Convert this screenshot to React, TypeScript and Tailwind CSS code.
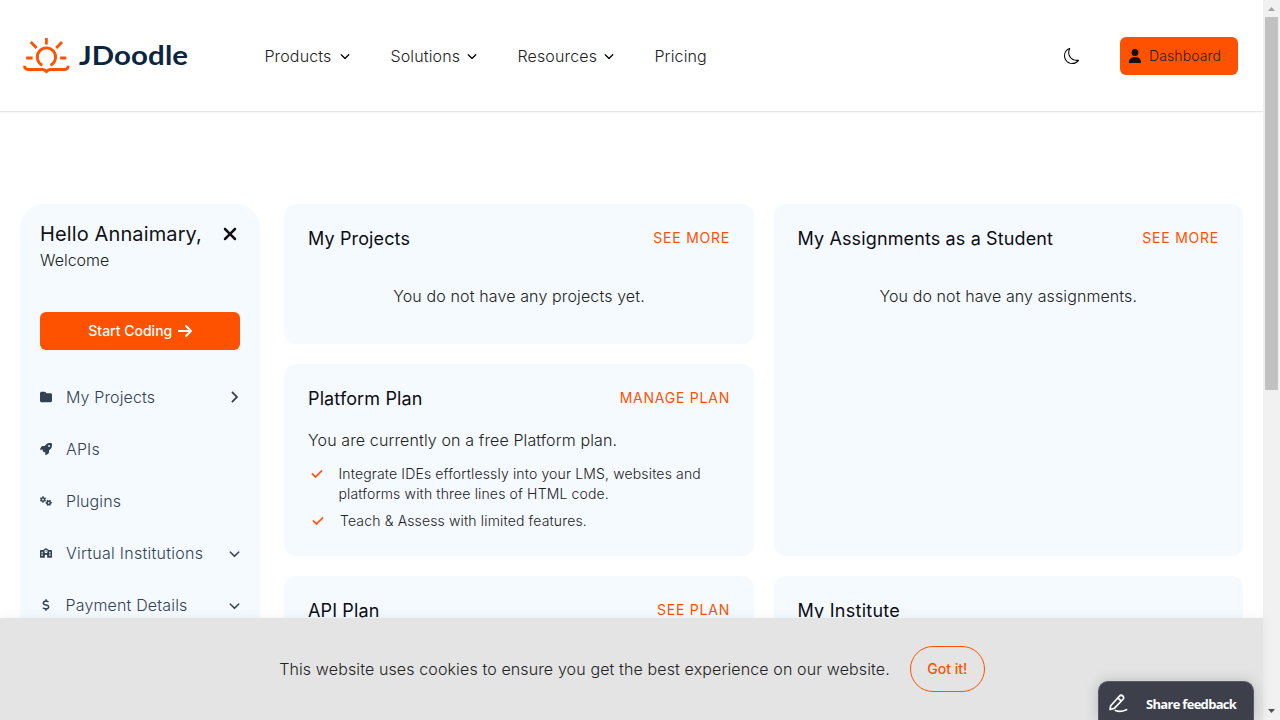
import type { ReactNode } from 'react';
import {
  FaArrowRight,
  FaCheck,
  FaChevronDown,
  FaChevronRight,
  FaDollarSign,
  FaFolder,
  FaGears,
  FaRocket,
  FaSchool,
  FaUser,
  FaXmark,
} from 'react-icons/fa6';
import { BsMoon } from 'react-icons/bs';

function Logo() {
  return (
    <div className="flex items-center">
      <svg width="48" height="38" viewBox="0 0 48 38" fill="none" stroke="#ff5200" strokeWidth="2.800" strokeLinecap="butt">
        <path d="M19.300 28.300A9.200 9.200 0 1 1 27.500 28.300" />
        <path d="M23.400 1v6.500M7.800 5l5.800 6M39 5l-5.800 6M3.200 21h6.400M37.100 21h6.200" />
        <path d="M1.500 28.800c0 2.700 1 3.700 3.500 3.700h14.600c2 0 2.900.8 3.800 2.200.9-1.400 1.800-2.200 3.800-2.200h14.500c2.500 0 3.500-1 3.500-3.700" strokeLinejoin="round" />
      </svg>
      <span className="mt-[-1px] ml-[8px] inline-block origin-left scale-x-[1.09] font-['Lato',sans-serif] text-[27px] leading-[34px] font-bold tracking-[0.100px] text-[#0b2540]">JDoodle</span>
    </div>
  );
}

function NavItem({ label, className }: { label: string; className: string }) {
  return (
    <div className={`flex items-center justify-between ${className}`}>
      <span>{label}</span>
      {label !== 'Pricing' && <FaChevronDown size={10} className="text-black" />}
    </div>
  );
}

function SideItem({ icon, label, trailing, className = 'tracking-[0.13px]' }: { icon: ReactNode; label: string; trailing?: ReactNode; className?: string }) {
  return (
    <li className="flex h-[52px] items-center">
      <span className="w-[26px] shrink-0">{icon}</span>
      <span className={`flex-1 whitespace-nowrap ${className}`}>{label}</span>
      {trailing}
    </li>
  );
}

function Card({ title, action, className, children }: { title: string; action?: string; className: string; children?: ReactNode }) {
  return (
    <section className={`rounded-xl bg-[#f5faff] px-6 pt-5 font-normal ${className}`}>
      <header className="flex h-7 items-center justify-between">
        <h2 className={`text-[18px] text-[#0c0c14] ${title === 'My Institute' ? 'tracking-[0.25px]' : 'tracking-[0.13px]'}`}>{title}</h2>
        {action && <a className="mb-px text-[14px] tracking-[0.770px] text-[#ff5200]">{action}</a>}
      </header>
      {children}
    </section>
  );
}

export default function App() {
  return (
    <div className="relative flex h-[720px] w-[1280px] overflow-hidden bg-white font-['Inter',sans-serif] text-[16px] font-light text-[#222]">
      <main className="h-[720px] w-[1263px] overflow-hidden">
        <header className="flex h-[112px] items-center border-b border-[#e8e8e8] pl-[23px] shadow-[0_1px_2px_rgba(0,0,0,0.04)]">
          <div className="w-[241.400px]"><Logo /></div>
          <nav className="flex flex-1 items-center tracking-[0.15px]">
            <NavItem label="Products" className="mr-[40px] w-[86px]" />
            <NavItem label="Solutions" className="mr-[40px] w-[87px]" />
            <NavItem label="Resources" className="mr-[40px] w-[97px]" />
            <NavItem label="Pricing" className="w-[52px]" />
          </nav>
          <BsMoon size={16} className="mr-[40px] text-black" />
          <button className="mr-[25px] flex h-[38px] w-[118px] items-center rounded-md bg-[#ff5200] pl-[8px] text-[14px] tracking-[0.1px] text-[#222]">
            <FaUser size={14} className="mr-[7px] text-[#111]" />
            Dashboard
          </button>
        </header>

        <div className="flex gap-6 pt-[92px] pl-5">
          <aside className="h-[600px] w-[240px] rounded-t-3xl bg-[#f5faff] px-5 pt-4">
            <div className="flex h-7 items-center justify-between text-[#111]">
              <h1 className="text-[20px] font-normal tracking-[0.120px] whitespace-nowrap">Hello Annaimary,</h1>
              <FaXmark size={20} />
            </div>
            <p className="h-6 leading-6">Welcome</p>
            <button className="mt-[40px] flex h-[38px] w-full items-center justify-center gap-[4.500px] rounded-md bg-[#ff5200] pb-px pl-px text-[14px] font-medium text-white">
              Start Coding <FaArrowRight size={16} />
            </button>
            <ul className="mt-[21px] text-[#334155]">
              <SideItem icon={<FaFolder size={12} />} label="My Projects" trailing={<FaChevronRight size={12} stroke="currentColor" strokeWidth={20} />} />
              <SideItem icon={<FaRocket size={12} />} label="APIs" />
              <SideItem icon={<FaGears size={12} />} label="Plugins" />
              <SideItem icon={<FaSchool size={12} />} label="Virtual Institutions" className="tracking-[0.260px]" trailing={<FaChevronDown size={11} stroke="currentColor" strokeWidth={12} />} />
              <SideItem icon={<FaDollarSign size={12} />} label="Payment Details" className="-ml-[0.500px] tracking-[0.160px]" trailing={<FaChevronDown size={11} stroke="currentColor" strokeWidth={12} />} />
            </ul>
          </aside>

          <div className="grid grid-cols-[470px_470px] grid-rows-[140px_192px_160px] gap-x-[19.500px] gap-y-5">
            <Card title="My Projects" action="SEE MORE" className="">
              <p className="mt-8 text-center leading-6 font-light tracking-[0.13px]">You do not have any projects yet.</p>
            </Card>
            <Card title="My Assignments as a Student" action="SEE MORE" className="row-span-2 mr-[0.500px]">
              <p className="mt-8 text-center leading-6 font-light tracking-[0.1px]">You do not have any assignments.</p>
            </Card>
            <Card title="Platform Plan" action="MANAGE PLAN" className="">
              <p className="mt-4 leading-6 font-light tracking-[0.12px]">You are currently on a free Platform plan.</p>
              <ul className="mt-3 text-[14px] leading-5 font-light tracking-[0.150px]">
                <li className="flex">
                  <FaCheck size={12} stroke="currentColor" strokeWidth={14} className="mt-1 mr-[15.500px] ml-[3px] shrink-0 text-[#ff5200]" />
                  <span>Integrate IDEs effortlessly into your LMS, websites and<br />platforms with three lines of HTML code.</span>
                </li>
                <li className="mt-[7px] flex">
                  <FaCheck size={12} stroke="currentColor" strokeWidth={14} className="mt-[3.500px] mr-[16px] ml-[4px] shrink-0 text-[#ff5200]" />
                  <span>Teach &amp; Assess with limited features.</span>
                </li>
              </ul>
            </Card>
            <Card title="API Plan" action="SEE PLAN" className="" />
            <Card title="My Institute" className="mr-[0.500px]" />
          </div>
        </div>
      </main>

      <div className="flex h-[720px] w-[17px] flex-col items-center bg-[#f1f1f1]">
        <svg width="17" height="17" viewBox="0 0 17 17"><path d="M5 11l3.500-4 3.500 4z" fill="#a3a3a3" /></svg>
        <div className="h-[373px] w-[13px] bg-[#c1c1c1]" />
        <svg className="mt-auto" width="17" height="17" viewBox="0 0 17 17"><path d="M5 6l3.500 4 3.500-4z" fill="#505050" /></svg>
      </div>

      <div className="absolute bottom-0 left-0 flex h-[102px] w-[1263px] items-center justify-center gap-5 bg-[#e4e4e4] pl-px tracking-[0.125px] shadow-[0_0_12px_rgba(0,0,0,0.06)]">
        <p>This website uses cookies to ensure you get the best experience on our website.</p>
        <button className="h-[46px] w-[75px] rounded-[24px] border border-[#ff5200] pb-px text-[14px] font-medium tracking-normal text-[#ff5200]">Got it!</button>
      </div>

      <button className="absolute bottom-0 left-[1098px] flex h-[39px] w-[156px] items-center rounded-t-[10px] border border-b-0 border-[#555963] bg-[#3d404b] pt-[7px] pl-[10px] font-['Open_Sans',sans-serif] text-[13px] font-bold tracking-[-0.700px] whitespace-nowrap text-white shadow-[0_0_14px_rgba(0,0,0,0.18)]">
        <svg className="mt-[-3px] mr-[18px]" width="19" height="19" viewBox="0 0 19 19" fill="none" stroke="white" strokeWidth="1.700" strokeLinecap="round" strokeLinejoin="round">
          <path d="M1 15.500l.7-3.700L10.300 2.200c1.200-1.300 2.400-1.200 3.500-.2s1.200 2.300 0 3.500L5.300 14.400zM9.200 4.200l2.500 2.500M6.500 16.500c3 1.300 7 1 11-.800" />
        </svg>
        Share feedback
      </button>
    </div>
  );
}
